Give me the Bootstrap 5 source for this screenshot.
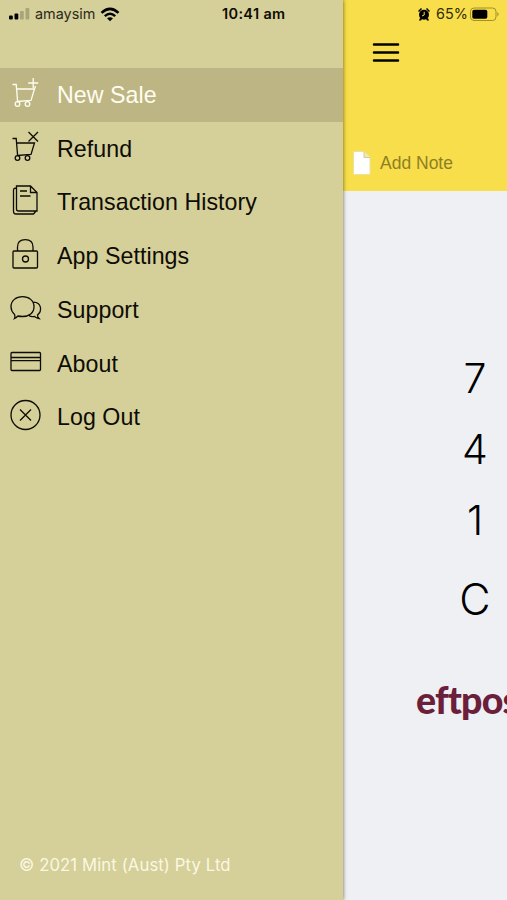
<!DOCTYPE html>
<html lang="en">
<head>
<meta charset="utf-8">
<meta name="viewport" content="width=device-width, initial-scale=1">
<title>Mint menu</title>
<link href="https://cdn.jsdelivr.net/npm/bootstrap@5.3.0/dist/css/bootstrap.min.css" rel="stylesheet">
<style>
body{font-family:"Liberation Sans",Arial,sans-serif;color:#0d0c05;background:#eff0f4}
svg{display:block;flex:none}
.screen{width:507px;height:900px}
.drawer{width:343px;background:#d5cf99;box-shadow:0 0 4px rgba(60,55,10,.75);z-index:1}
.status{height:28px;font-family:Inter,sans-serif;font-size:14px;line-height:28px;white-space:nowrap}
.drawer .status{padding-left:8px;margin-bottom:40px}
.carrier{width:61px;margin-left:5px;font-size:14.4px;color:#2c2a1b}
.clock{margin-left:102px;font-weight:600;font-size:14.5px;letter-spacing:.35px}
.menu-item{height:53.75px;padding-left:8px;font-size:23.2px;letter-spacing:.06px;line-height:54px;color:inherit;text-decoration:none}
.menu-item svg{width:36px;height:44px;fill:none;stroke:currentColor;stroke-width:1.3;margin-right:13px}
.menu-item.current{background:#bdb684;color:#fffdf0}
.legal{padding:0 0 24px 19px;font-family:Inter,sans-serif;font-size:16.7px;line-height:22px;letter-spacing:.1px;color:#fbf8e2}
.sale-head{height:191px;background:#f7de4a}
.sale-head .status{padding-left:75px}
.battery-text{margin-left:6px;width:33px;font-size:14.4px;color:#332d08}
.burger{margin:14px 0 0 29px}
.note{margin-top:86px;padding-left:10px;font-size:17.5px;line-height:28px;color:#8f7e25}
.note span{margin-left:9px}
.keys{padding:152px 0 0 97px;font-family:Inter,sans-serif;font-weight:300;color:#000;font-size:41px;line-height:71px}
.keys div{width:70px;text-align:center}
.keys .clear{font-size:43px;line-height:87px}
.scheme{font-family:Lato,sans-serif;font-weight:900;font-size:37.5px;line-height:44px;color:#6b1f3b;padding-left:73px;margin-top:35px;white-space:nowrap;letter-spacing:-.8px}
</style>
</head>
<body>
<div class="screen d-flex overflow-hidden">
  <nav class="drawer d-flex flex-column flex-shrink-0">
    <div class="status d-flex align-items-center">
      <svg width="22" height="12" viewBox="0 0 22 12"><rect x="1" y="7.5" width="3.8" height="4" rx="1"/><rect x="6.5" y="5.5" width="3.8" height="6" rx="1"/><g fill="#aaa579"><rect x="12" y="3" width="3.8" height="8.5" rx="1"/><rect x="17.5" y="0" width="3.8" height="11.5" rx="1"/></g></svg>
      <span class="carrier">amaysim</span>
      <svg class="ms-1" width="20" height="15" viewBox="0 0 20 15" fill="none" stroke="#000" stroke-width="2.5"><path d="M1.5 5.8Q10-2 18.5 5.8M4.8 9.1Q10 4.5 15.2 9.1"/><path d="M7 11.3Q10 9 13 11.3L10 14.3Z" fill="#000" stroke="none"/></svg>
      <span class="clock">10:41 am</span>
    </div>
    <a class="menu-item current d-flex align-items-center" href="#"><svg viewBox="0 0 36 44"><path d="M4.5 11.5H8.2L9.6 28.5L23 27.5L26.5 16H8.5M26.5 16L27.5 13M25.2 5V15M20.2 10H30.2"/><circle cx="9.5" cy="31" r="2.3"/><circle cx="19.5" cy="31" r="2.3"/></svg>New Sale</a>
    <a class="menu-item d-flex align-items-center" href="#"><svg viewBox="0 0 36 44"><path d="M4.5 11.5H8.2L9.6 28.5L23 27.5L26.5 16H8.5M20.5 5L30 14.5M30 5L20.5 14.5"/><circle cx="9.5" cy="31" r="2.3"/><circle cx="19.5" cy="31" r="2.3"/></svg>Refund</a>
    <a class="menu-item d-flex align-items-center" href="#"><svg viewBox="0 0 36 44"><path d="M8.5 6H22.5L29 12.5V31H10.5Q8.5 31 8.5 29ZM22.5 6V12.5H29M8.5 8Q5.5 8 5.5 10.5V31.5Q5.5 34 8 34H25.5L28 31M12 11H19M12 16H22.5"/></svg>Transaction History</a>
    <a class="menu-item d-flex align-items-center" href="#"><svg viewBox="0 0 36 44"><rect x="5" y="17" width="24.5" height="17" rx="1"/><path d="M9.5 17V13Q9.5 5.7 17.3 5.7Q25 5.7 25 13V17"/><circle cx="17.5" cy="25" r="3"/></svg>App Settings</a>
    <a class="menu-item d-flex align-items-center" href="#"><svg viewBox="0 0 36 44"><path d="M6.5 30.5Q7.5 28.5 6.5 26.4Q3 23 3 18.7C3 12.5 8 8.7 14.5 8.7S26 12.5 26 18.7S21 28.5 14.5 28.5Q12 28.5 10 28Q8.5 29.5 6.5 30.5ZM25.5 14.2C33.5 14.5 34.5 23 29.5 27Q29.5 29 31 30.5Q28 30 26.5 28.5Q23 29.2 20.5 27.2"/></svg>Support</a>
    <a class="menu-item d-flex align-items-center" href="#"><svg viewBox="0 0 36 44"><rect x="3" y="10.5" width="29.5" height="18" rx="1"/><path d="M3 15.5H32.5M3 18.7H32.5"/></svg>About</a>
    <a class="menu-item d-flex align-items-center" href="#"><svg viewBox="0 0 36 44"><circle cx="17.5" cy="20" r="14.5"/><path d="M12 14.5L23 25.5M23 14.5L12 25.5"/></svg>Log Out</a>
    <div class="legal mt-auto">© 2021 Mint (Aust) Pty Ltd</div>
  </nav>
  <main class="flex-grow-1 overflow-hidden">
    <header class="sale-head">
      <div class="status d-flex align-items-center">
        <svg width="12" height="13" viewBox="0 0 12 13"><circle cx="6" cy="6.8" r="5"/><path d="M0 3L3 0L4 1L1 4ZM12 3L9 0L8 1L11 4ZM2 10L1 12.5H3L4 11ZM10 10L11 12.5H9L8 11Z"/><path d="M6.2 3.8V7L4 8" fill="none" stroke="#f7de4a"/></svg>
        <span class="battery-text">65%</span>
        <svg width="32" height="15" viewBox="0 0 32 15"><rect x="1.5" y="1" width="25.5" height="12.5" rx="3.5" fill="none" stroke="#a08f2c"/><rect x="3.3" y="2.8" width="15" height="9" rx="1.8"/><path d="M28.3 5Q31 7 28.3 9.5Z" fill="#a08f2c"/></svg>
      </div>
      <svg class="burger" width="28" height="21" viewBox="0 0 28 21" stroke="#000" stroke-width="2.5" stroke-linecap="round"><path d="M2 2.4H26M2 10.4H26M2 18.4H26"/></svg>
      <div class="note d-flex align-items-center"><svg width="18" height="24" viewBox="0 0 18 24"><path d="M.5.5H11L17 6.5V23.5H.5Z" fill="#fff" stroke="#ede1a0"/><path d="M11 .5V6.5H17" fill="#eee6bf" stroke="#d8cb8a"/></svg><span>Add Note</span></div>
    </header>
    <section class="keys"><div>7</div><div>4</div><div>1</div><div class="clear">C</div></section>
    <div class="scheme">eftpos</div>
  </main>
</div>
<script src="https://cdn.jsdelivr.net/npm/bootstrap@5.3.0/dist/js/bootstrap.bundle.min.js"></script>
</body>
</html>
